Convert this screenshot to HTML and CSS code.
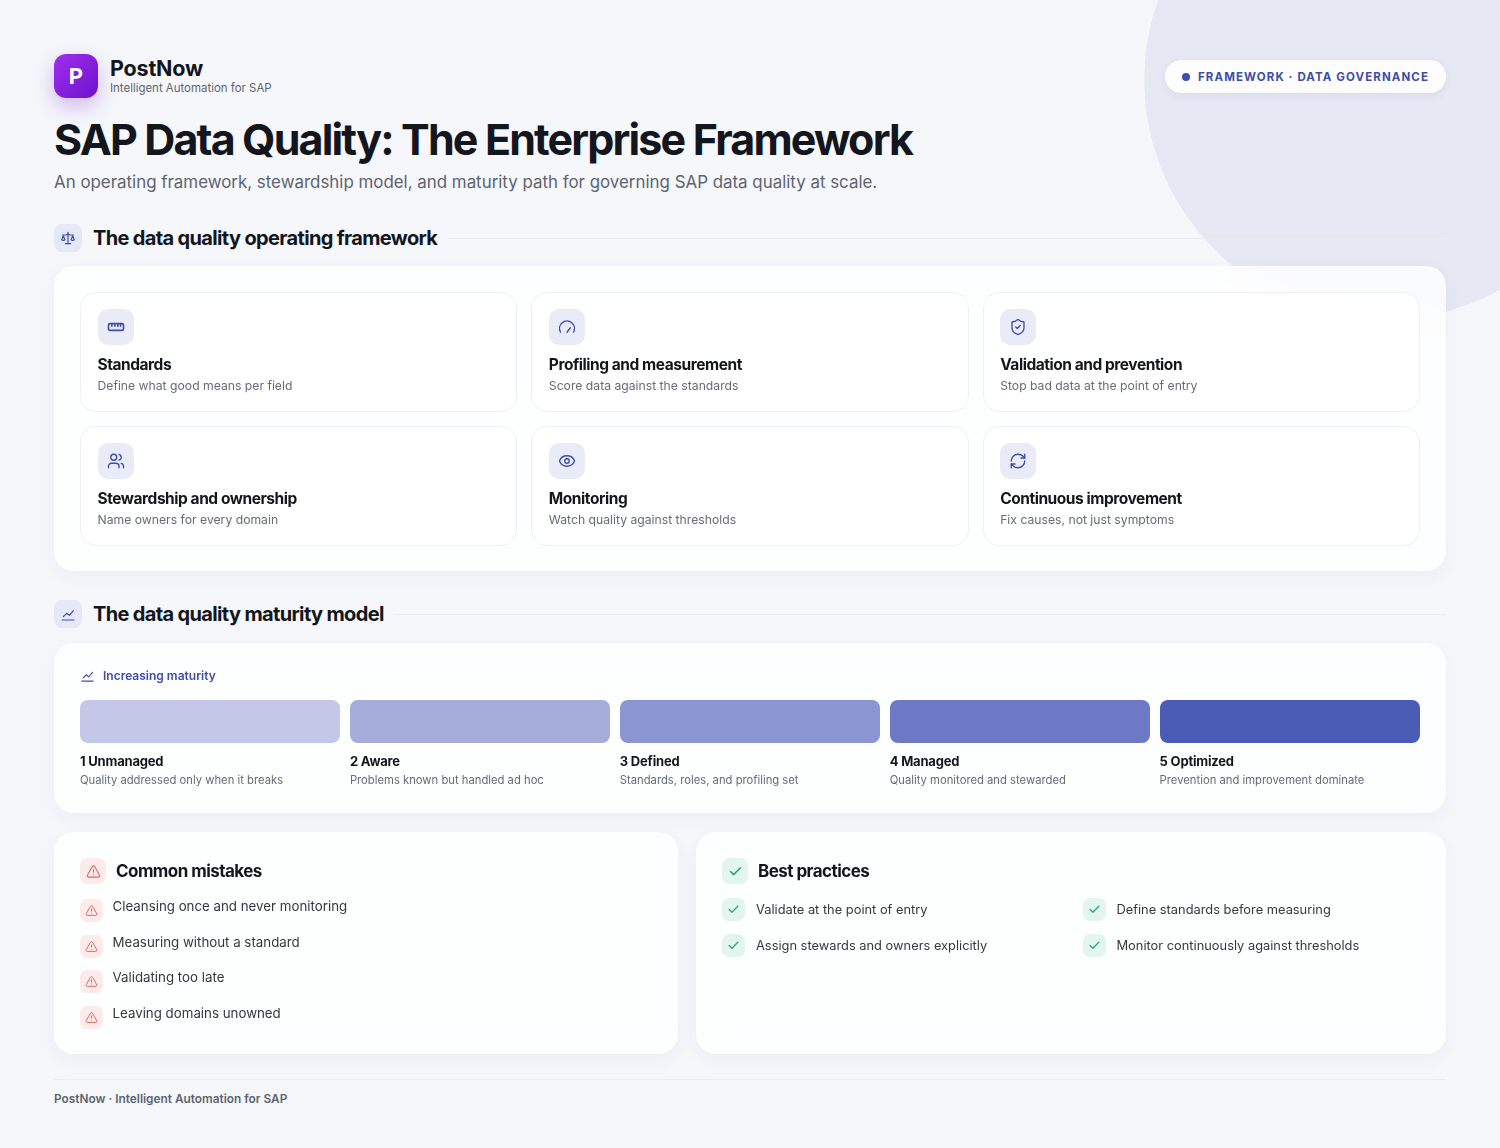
FILE: index.html
```html
<!DOCTYPE html>
<html lang="en">
<head>
  <meta charset="UTF-8" />
  <meta name="viewport" content="width=device-width, initial-scale=1" />
  <title>SAP Data Quality: The Enterprise Framework</title>
  <link rel="stylesheet" href="styles.css">
</head>
<body>

  <!-- HEADER -->
  <header class="top">
    <div class="brand">
      <div class="logo">P</div>
      <div class="brand-text">
        <div class="brand-name">PostNow</div>
        <div class="brand-sub">Intelligent Automation for SAP</div>
      </div>
    </div>
    <div class="pill"><span class="dot"></span>FRAMEWORK · DATA GOVERNANCE</div>
  </header>

  <h1>SAP Data Quality: The Enterprise Framework</h1>
  <p class="lead">An operating framework, stewardship model, and maturity path for governing SAP data quality at scale.</p>

  <!-- FRAMEWORK -->
  <div class="section-head first">
    <div class="section-icon">
      <svg class="ico" viewBox="0 0 24 24"><path d="M2.5 15 5 8.5 7.5 15c-.7.9-4.3.9-5 0Z"/><path d="M16.5 15 19 8.5l2.5 6.5c-.7.9-4.3.9-5 0Z"/><path d="M8 20.5h8"/><path d="M12 3.5v17"/><path d="M4 7.5h5l3-1.5 3 1.5h5"/></svg>
    </div>
    <h2>The data quality operating framework</h2>
    <div class="rule"></div>
  </div>

  <section class="panel framework">
    <div class="card">
      <div class="card-icon"><svg class="ico ruler" viewBox="0 0 24 24"><rect x="2" y="7.5" width="20" height="9" rx="2"/><path d="M6.5 8v3M10.5 8v3M14.5 8v3M18 8v3"/></svg></div>
      <h3>Standards</h3>
      <p>Define what good means per field</p>
    </div>
    <div class="card">
      <div class="card-icon"><svg class="ico" viewBox="0 0 24 24"><path d="m12 19 4.5-6"/><path d="M3.34 19a10 10 0 1 1 17.32 0"/></svg></div>
      <h3>Profiling and measurement</h3>
      <p>Score data against the standards</p>
    </div>
    <div class="card">
      <div class="card-icon"><svg class="ico" viewBox="0 0 24 24"><path d="M20 13c0 5-3.5 7.5-7.66 8.95a1 1 0 0 1-.67-.01C7.5 20.5 4 18 4 13V6a1 1 0 0 1 1-1c2 0 4.5-1.2 6.24-2.72a1.17 1.17 0 0 1 1.52 0C14.51 3.81 17 5 19 5a1 1 0 0 1 1 1z"/><path d="m9 12 2 2 4-4"/></svg></div>
      <h3>Validation and prevention</h3>
      <p>Stop bad data at the point of entry</p>
    </div>
    <div class="card">
      <div class="card-icon"><svg class="ico" viewBox="0 0 24 24"><path d="M16 21v-2a4 4 0 0 0-4-4H6a4 4 0 0 0-4 4v2"/><circle cx="9" cy="7" r="4"/><path d="M22 21v-2a4 4 0 0 0-3-3.87"/><path d="M16 3.13a4 4 0 0 1 0 7.75"/></svg></div>
      <h3>Stewardship and ownership</h3>
      <p>Name owners for every domain</p>
    </div>
    <div class="card">
      <div class="card-icon"><svg class="ico" viewBox="0 0 24 24"><path d="M2.06 12.35a1 1 0 0 1 0-.7 10.75 10.75 0 0 1 19.88 0 1 1 0 0 1 0 .7 10.75 10.75 0 0 1-19.88 0"/><circle cx="12" cy="12" r="3"/></svg></div>
      <h3>Monitoring</h3>
      <p>Watch quality against thresholds</p>
    </div>
    <div class="card">
      <div class="card-icon"><svg class="ico" viewBox="0 0 24 24"><path d="M3 12a9 9 0 0 1 9-9 9.75 9.75 0 0 1 6.74 2.74L21 8"/><path d="M21 3v5h-5"/><path d="M21 12a9 9 0 0 1-9 9 9.75 9.75 0 0 1-6.74-2.74L3 16"/><path d="M8 16H3v5"/></svg></div>
      <h3>Continuous improvement</h3>
      <p>Fix causes, not just symptoms</p>
    </div>
  </section>

  <!-- MATURITY -->
  <div class="section-head second">
    <div class="section-icon">
      <svg class="ico" viewBox="0 0 24 24"><path d="M3 21h18"/><path d="m5 16 5-5 4 3 6-7"/></svg>
    </div>
    <h2>The data quality maturity model</h2>
    <div class="rule"></div>
  </div>

  <section class="panel maturity">
    <div class="axis">
      <svg class="ico" viewBox="0 0 24 24"><path d="M3 21h18"/><path d="m5 16 5-5 4 3 6-7"/></svg>
      Increasing maturity
    </div>
    <div class="levels">
      <div class="level">
        <div class="bar bar-1"></div>
        <h4>1 Unmanaged</h4>
        <p>Quality addressed only when it breaks</p>
      </div>
      <div class="level">
        <div class="bar bar-2"></div>
        <h4>2 Aware</h4>
        <p>Problems known but handled ad hoc</p>
      </div>
      <div class="level">
        <div class="bar bar-3"></div>
        <h4>3 Defined</h4>
        <p>Standards, roles, and profiling set</p>
      </div>
      <div class="level">
        <div class="bar bar-4"></div>
        <h4>4 Managed</h4>
        <p>Quality monitored and stewarded</p>
      </div>
      <div class="level">
        <div class="bar bar-5"></div>
        <h4>5 Optimized</h4>
        <p>Prevention and improvement dominate</p>
      </div>
    </div>
  </section>

  <!-- MISTAKES / PRACTICES -->
  <div class="bottom">
    <section class="panel mistakes">
      <div class="list-head">
        <div class="head-badge red"><svg class="ico" viewBox="0 0 24 24"><path d="m21.73 18-8-14a2 2 0 0 0-3.48 0l-8 14A2 2 0 0 0 4 21h16a2 2 0 0 0 1.73-3"/><path d="M12 9v4"/><path d="M12 17h.01"/></svg></div>
        <h3>Common mistakes</h3>
      </div>
      <ul class="warn-list">
        <li><span class="badge red"><svg class="ico" viewBox="0 0 24 24"><path d="m21.73 18-8-14a2 2 0 0 0-3.48 0l-8 14A2 2 0 0 0 4 21h16a2 2 0 0 0 1.73-3"/><path d="M12 9v4"/><path d="M12 17h.01"/></svg></span>Cleansing once and never monitoring</li>
        <li><span class="badge red"><svg class="ico" viewBox="0 0 24 24"><path d="m21.73 18-8-14a2 2 0 0 0-3.48 0l-8 14A2 2 0 0 0 4 21h16a2 2 0 0 0 1.73-3"/><path d="M12 9v4"/><path d="M12 17h.01"/></svg></span>Measuring without a standard</li>
        <li><span class="badge red"><svg class="ico" viewBox="0 0 24 24"><path d="m21.73 18-8-14a2 2 0 0 0-3.48 0l-8 14A2 2 0 0 0 4 21h16a2 2 0 0 0 1.73-3"/><path d="M12 9v4"/><path d="M12 17h.01"/></svg></span>Validating too late</li>
        <li><span class="badge red"><svg class="ico" viewBox="0 0 24 24"><path d="m21.73 18-8-14a2 2 0 0 0-3.48 0l-8 14A2 2 0 0 0 4 21h16a2 2 0 0 0 1.73-3"/><path d="M12 9v4"/><path d="M12 17h.01"/></svg></span>Leaving domains unowned</li>
      </ul>
    </section>
    <section class="panel practices">
      <div class="list-head">
        <div class="head-badge green"><svg class="ico" viewBox="0 0 24 24"><path d="M20 6 9 17l-5-5"/></svg></div>
        <h3>Best practices</h3>
      </div>
      <ul class="check-list">
        <li><span class="badge green"><svg class="ico" viewBox="0 0 24 24"><path d="M20 6 9 17l-5-5"/></svg></span>Validate at the point of entry</li>
        <li><span class="badge green"><svg class="ico" viewBox="0 0 24 24"><path d="M20 6 9 17l-5-5"/></svg></span>Define standards before measuring</li>
        <li><span class="badge green"><svg class="ico" viewBox="0 0 24 24"><path d="M20 6 9 17l-5-5"/></svg></span>Assign stewards and owners explicitly</li>
        <li><span class="badge green"><svg class="ico" viewBox="0 0 24 24"><path d="M20 6 9 17l-5-5"/></svg></span>Monitor continuously against thresholds</li>
      </ul>
    </section>
  </div>

  <footer>PostNow · Intelligent Automation for SAP</footer>
</body>
</html>
```

FILE: styles.css
```css
/* RESET */
* {
  margin: 0;
  padding: 0;
  box-sizing: border-box;
}

html, body {
  width: 100%;
  height: 100%;
  overflow: hidden;
}

body {
  padding: 54px 54px 0;
  background:
    radial-gradient(circle 240px at 1384px 80px, #e6e9f4 99.7%, rgba(230, 233, 244, 0) 100%),
    #f5f7fb;
  color: #14161d;
  font-family: 'Inter', sans-serif;
}

.ico {
  fill: none;
  stroke: currentColor;
  stroke-width: 2;
  stroke-linecap: round;
  stroke-linejoin: round;
}

/* HEADER */
.top {
  display: flex;
  justify-content: space-between;
  align-items: flex-start;
}

.brand {
  display: flex;
  align-items: center;
  gap: 12px;
}

.logo {
  width: 44px;
  height: 44px;
  display: flex;
  align-items: center;
  justify-content: center;
  border-radius: 12px;
  background: linear-gradient(135deg, #a02ff0, #6d12c9);
  box-shadow: 0 8px 20px rgba(126, 34, 206, 0.3);
  color: #fff;
  font-size: 22px;
  font-weight: 700;
}

.brand-text {
  padding-bottom: 2px;
}

.brand-name {
  font-size: 21.5px;
  font-weight: 700;
  line-height: 26px;
  letter-spacing: -0.2px;
}

.brand-sub {
  font-size: 11.45px;
  line-height: 15px;
  color: #5d6370;
}

.pill {
  display: flex;
  align-items: center;
  gap: 8px;
  height: 33px;
  margin-top: 6px;
  padding: 0 17px;
  border-radius: 17px;
  background: rgba(255, 255, 255, 0.9);
  box-shadow: 0 3px 10px rgba(40, 50, 110, 0.07);
  color: #3f4da8;
  font-size: 11.5px;
  font-weight: 700;
  letter-spacing: 1.1px;
}

.dot {
  width: 8px;
  height: 8px;
  border-radius: 50%;
  background: #3f4db0;
}

h1 {
  margin-top: 17px;
  font-size: 43px;
  line-height: 48px;
  font-weight: 700;
  letter-spacing: -1.85px;
}

.lead {
  margin-top: 8px;
  font-size: 16.9px;
  line-height: 22px;
  color: #5d6370;
}

/* SECTION HEADINGS */
.section-head {
  display: flex;
  align-items: center;
  height: 28px;
  gap: 11px;
}

.section-head.first {
  margin-top: 31px;
}

.section-head.second {
  margin-top: 29px;
}

.section-icon {
  width: 28px;
  height: 28px;
  display: flex;
  align-items: center;
  justify-content: center;
  border-radius: 8px;
  background: #e6e9f5;
  color: #3f4da8;
}

.section-icon .ico {
  width: 16px;
  height: 16px;
  stroke-width: 1.8;
}

h2 {
  font-size: 20px;
  font-weight: 700;
  letter-spacing: -0.65px;
  white-space: nowrap;
}

.rule {
  flex: 1;
  height: 1px;
  background: #eceef4;
}

/* PANELS */
.panel {
  border-radius: 20px;
  background: rgba(255, 255, 255, 0.8);
  backdrop-filter: blur(14px);
  box-shadow: 0 6px 20px rgba(40, 50, 110, 0.05);
  padding: 26px;
}

.framework {
  margin-top: 14px;
  height: 305px;
  display: grid;
  grid-template-columns: repeat(3, 1fr);
  grid-template-rows: 120px 120px;
  gap: 14px;
  padding: 26px 26px 0;
}

.card {
  padding: 16px 16.5px;
  border: 1px solid #eef0f5;
  border-radius: 16px;
  background: #fff;
}

.card-icon {
  width: 36px;
  height: 36px;
  display: flex;
  align-items: center;
  justify-content: center;
  border-radius: 10px;
  background: #e9ecf7;
  color: #3f4da8;
}

.card-icon .ico {
  width: 18px;
  height: 18px;
  stroke-width: 1.8;
}

.card-icon .ruler {
  stroke-width: 2.2;
}

.card h3 {
  margin-top: 10px;
  font-size: 15.5px;
  line-height: 20px;
  font-weight: 700;
  letter-spacing: -0.45px;
}

.card p {
  margin-top: 1.5px;
  font-size: 12.2px;
  line-height: 18px;
  color: #666b78;
}

/* MATURITY */
.maturity {
  margin-top: 15px;
  height: 170px;
  padding: 25px 26px 0;
}

.axis {
  display: flex;
  align-items: center;
  gap: 8px;
  height: 15px;
  color: #3f4da8;
  font-size: 12px;
  font-weight: 600;
}

.axis .ico {
  width: 15px;
  height: 15px;
  stroke-width: 1.8;
}

.levels {
  display: grid;
  grid-template-columns: repeat(5, 1fr);
  gap: 9.5px;
  margin-top: 17px;
}

.bar {
  height: 43px;
  border-radius: 8px;
}

.bar-1 { background: #c3c8e8; }
.bar-2 { background: #a6addb; }
.bar-3 { background: #8a95d1; }
.bar-4 { background: #6d79c4; }
.bar-5 { background: #4b5cb6; }

.level h4 {
  margin-top: 9px;
  font-size: 13px;
  line-height: 18px;
  font-weight: 700;
  letter-spacing: -0.2px;
}

.level p {
  margin-top: 2px;
  font-size: 11.25px;
  line-height: 16px;
  color: #666b78;
}

/* BOTTOM */
.bottom {
  display: flex;
  gap: 18px;
  margin-top: 19px;
  height: 222px;
}

.mistakes {
  width: 624px;
}

.practices {
  flex: 1;
}

.list-head {
  display: flex;
  align-items: center;
  gap: 10px;
}

.list-head h3 {
  font-size: 17px;
  font-weight: 700;
  letter-spacing: -0.55px;
}

.head-badge {
  width: 26px;
  height: 26px;
  display: flex;
  align-items: center;
  justify-content: center;
  border-radius: 8px;
}

.head-badge .ico {
  width: 15px;
  height: 15px;
  stroke-width: 1.7;
}

.badge {
  flex: none;
  width: 23px;
  height: 23px;
  display: flex;
  align-items: center;
  justify-content: center;
  border-radius: 7px;
}

.badge .ico {
  width: 13px;
  height: 13px;
  stroke-width: 1.8;
}

.red {
  background: #fdeaea;
  color: #e0655f;
}

.green {
  background: #e3f5ef;
  color: #25a576;
}

.green .ico {
  stroke-width: 2.3;
}

.warn-list, .check-list {
  list-style: none;
}

.warn-list {
  margin-top: 14px;
}

.warn-list li {
  display: flex;
  gap: 9.5px;
  height: 23px;
  margin-bottom: 12.7px;
  font-size: 13.3px;
  line-height: 16px;
  color: #343842;
}

.warn-list li .badge {
  margin-top: 1px;
}

.check-list {
  display: grid;
  grid-template-columns: 360.5px 1fr;
  row-gap: 13px;
  margin-top: 14px;
}

.check-list li {
  display: flex;
  align-items: center;
  gap: 11px;
  font-size: 12.85px;
  color: #343842;
}

footer {
  margin-top: 25px;
  padding-top: 12px;
  border-top: 1px solid #eceef4;
  font-size: 11.85px;
  line-height: 15px;
  font-weight: 600;
  color: #5d6370;
}
```
